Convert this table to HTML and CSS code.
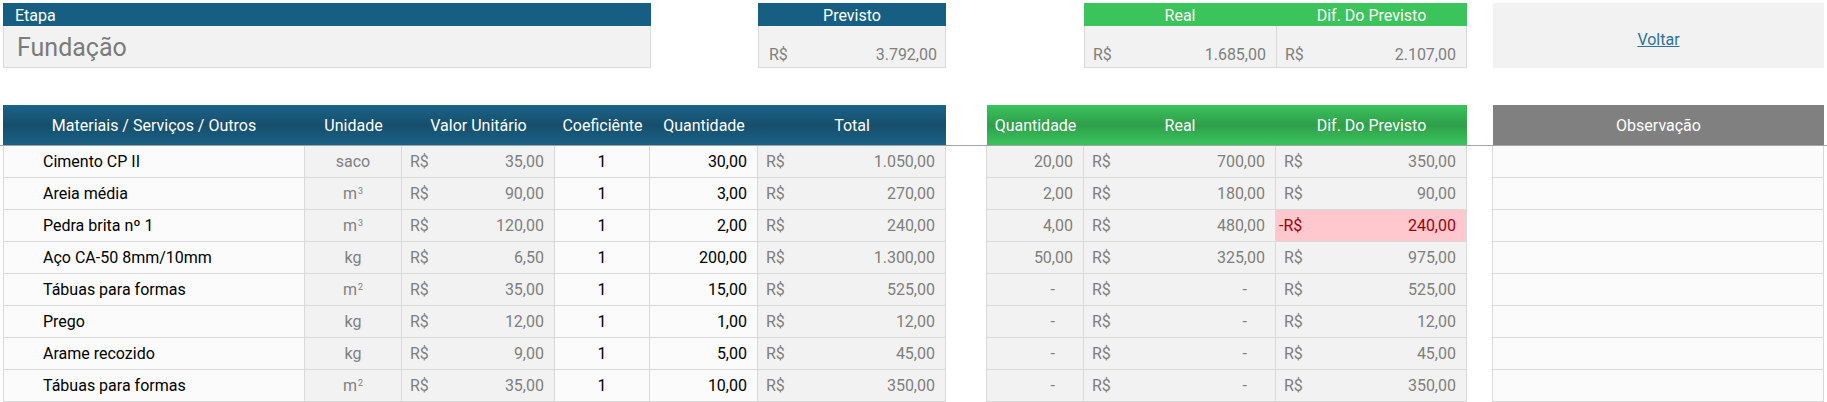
FILE: index.html
```html
<!DOCTYPE html>
<html lang="pt-BR">
<head>
<meta charset="utf-8">
<title>Fundação</title>
<link rel="stylesheet" href="styles.css">
</head>
<body>
<div class="page">
  <div class="grid top">
    <div class="card etapa">
      <div class="card-head blue left">Etapa</div>
      <div class="card-body etapa-body">Fundação</div>
    </div>
    <div class="card previsto">
      <div class="card-head blue">Previsto</div>
      <div class="card-body money-body"><span>R$</span><span>3.792,00</span></div>
    </div>
    <div class="card real">
      <div class="card-head green">Real</div>
      <div class="card-body money-body"><span>R$</span><span>1.685,00</span></div>
    </div>
    <div class="card dif">
      <div class="card-head green">Dif. Do Previsto</div>
      <div class="card-body money-body"><span>R$</span><span>2.107,00</span></div>
    </div>
    <div class="voltar"><a href="#">Voltar</a></div>
  </div>

  <div class="thead-wrap">
    <div class="grid thead">
      <div class="th blue-g">Materiais / Serviços / Outros</div>
      <div class="th blue-g">Unidade</div>
      <div class="th blue-g">Valor Unitário</div>
      <div class="th blue-g">Coeficiênte</div>
      <div class="th blue-g">Quantidade</div>
      <div class="th blue-g">Total</div>
      <div class="th-gap"></div>
      <div class="th green-g">Quantidade</div>
      <div class="th green-g">Real</div>
      <div class="th green-g">Dif. Do Previsto</div>
      <div class="th-gap"></div>
      <div class="th gray-h">Observação</div>
    </div>
  </div>

  <div class="tbody">
    <div class="grid row">
      <div class="td name">Cimento CP II</div>
      <div class="td unit">saco</div>
      <div class="td acc g"><span>R$</span><span>35,00</span></div>
      <div class="td coef">1</div>
      <div class="td qty">30,00</div>
      <div class="td acc g"><span>R$</span><span>1.050,00</span></div>
      <div class="gap"></div>
      <div class="td rq g">20,00</div>
      <div class="td acc g"><span>R$</span><span>700,00</span></div>
      <div class="td acc g"><span>R$</span><span>350,00</span></div>
      <div class="gap"></div>
      <div class="td obs"></div>
    </div>
    <div class="grid row">
      <div class="td name">Areia média</div>
      <div class="td unit">m<sup>3</sup></div>
      <div class="td acc g"><span>R$</span><span>90,00</span></div>
      <div class="td coef">1</div>
      <div class="td qty">3,00</div>
      <div class="td acc g"><span>R$</span><span>270,00</span></div>
      <div class="gap"></div>
      <div class="td rq g">2,00</div>
      <div class="td acc g"><span>R$</span><span>180,00</span></div>
      <div class="td acc g"><span>R$</span><span>90,00</span></div>
      <div class="gap"></div>
      <div class="td obs"></div>
    </div>
    <div class="grid row">
      <div class="td name">Pedra brita nº 1</div>
      <div class="td unit">m<sup>3</sup></div>
      <div class="td acc g"><span>R$</span><span>120,00</span></div>
      <div class="td coef">1</div>
      <div class="td qty">2,00</div>
      <div class="td acc g"><span>R$</span><span>240,00</span></div>
      <div class="gap"></div>
      <div class="td rq g">4,00</div>
      <div class="td acc g"><span>R$</span><span>480,00</span></div>
      <div class="td acc neg"><span>-R$</span><span>240,00</span></div>
      <div class="gap"></div>
      <div class="td obs"></div>
    </div>
    <div class="grid row">
      <div class="td name">Aço CA-50 8mm/10mm</div>
      <div class="td unit">kg</div>
      <div class="td acc g"><span>R$</span><span>6,50</span></div>
      <div class="td coef">1</div>
      <div class="td qty">200,00</div>
      <div class="td acc g"><span>R$</span><span>1.300,00</span></div>
      <div class="gap"></div>
      <div class="td rq g">50,00</div>
      <div class="td acc g"><span>R$</span><span>325,00</span></div>
      <div class="td acc g"><span>R$</span><span>975,00</span></div>
      <div class="gap"></div>
      <div class="td obs"></div>
    </div>
    <div class="grid row">
      <div class="td name">Tábuas para formas</div>
      <div class="td unit">m<sup>2</sup></div>
      <div class="td acc g"><span>R$</span><span>35,00</span></div>
      <div class="td coef">1</div>
      <div class="td qty">15,00</div>
      <div class="td acc g"><span>R$</span><span>525,00</span></div>
      <div class="gap"></div>
      <div class="td rq g dash">-</div>
      <div class="td acc g"><span>R$</span><span class="dash">-</span></div>
      <div class="td acc g"><span>R$</span><span>525,00</span></div>
      <div class="gap"></div>
      <div class="td obs"></div>
    </div>
    <div class="grid row">
      <div class="td name">Prego</div>
      <div class="td unit">kg</div>
      <div class="td acc g"><span>R$</span><span>12,00</span></div>
      <div class="td coef">1</div>
      <div class="td qty">1,00</div>
      <div class="td acc g"><span>R$</span><span>12,00</span></div>
      <div class="gap"></div>
      <div class="td rq g dash">-</div>
      <div class="td acc g"><span>R$</span><span class="dash">-</span></div>
      <div class="td acc g"><span>R$</span><span>12,00</span></div>
      <div class="gap"></div>
      <div class="td obs"></div>
    </div>
    <div class="grid row">
      <div class="td name">Arame recozido</div>
      <div class="td unit">kg</div>
      <div class="td acc g"><span>R$</span><span>9,00</span></div>
      <div class="td coef">1</div>
      <div class="td qty">5,00</div>
      <div class="td acc g"><span>R$</span><span>45,00</span></div>
      <div class="gap"></div>
      <div class="td rq g dash">-</div>
      <div class="td acc g"><span>R$</span><span class="dash">-</span></div>
      <div class="td acc g"><span>R$</span><span>45,00</span></div>
      <div class="gap"></div>
      <div class="td obs"></div>
    </div>
    <div class="grid row">
      <div class="td name">Tábuas para formas</div>
      <div class="td unit">m<sup>2</sup></div>
      <div class="td acc g"><span>R$</span><span>35,00</span></div>
      <div class="td coef">1</div>
      <div class="td qty">10,00</div>
      <div class="td acc g"><span>R$</span><span>350,00</span></div>
      <div class="gap"></div>
      <div class="td rq g dash">-</div>
      <div class="td acc g"><span>R$</span><span class="dash">-</span></div>
      <div class="td acc g"><span>R$</span><span>350,00</span></div>
      <div class="gap"></div>
      <div class="td obs"></div>
    </div>
  </div>
</div>
</body>
</html>
```

FILE: styles.css
```css
* { box-sizing: border-box; }
html, body { margin: 0; padding: 0; background: #ffffff; }
body {
  font-family: Roboto, "Liberation Sans", Arial, sans-serif;
  font-size: 16px;
  color: #000;
  overflow: hidden;
}
.page { padding: 3px 0 0 3px; width: 1827px; }

.grid {
  display: grid;
  grid-template-columns: 302px 97px 153px 95px 108px 188px 41px 97px 192px 191px 26px 331px;
}

/* ---------- top summary ---------- */
.top { height: 65px; }
.card { display: flex; flex-direction: column; }
.etapa { grid-column: 1 / 5; margin-right: -1px; }
.previsto { grid-column: 6 / 7; }
.real { grid-column: 9 / 10; }
.dif { grid-column: 10 / 11; }
.voltar { grid-column: 12 / 13; }

.card-head {
  height: 23px;
  color: #fff;
  display: flex;
  align-items: center;
  justify-content: center;
  font-size: 16px;
  padding-top: 1px;
}
.card-head.left { justify-content: flex-start; padding-left: 12px; }
.blue { background: #175f82; }
.green { background: #3bc35c; }

.card-body {
  height: 42px;
  background: #f2f2f2;
  border: 1px solid #d9d9d9;
  border-top: none;
  color: #7f7f7f;
}
.etapa-body {
  display: flex;
  align-items: center;
  padding-left: 13px;
  font-size: 25px;
  color: #7b7b7b;
  padding-top: 2px;
}
.money-body {
  display: flex;
  justify-content: space-between;
  align-items: flex-end;
  padding: 0 8px 3px 10px;
}
.real .money-body { border-right: none; padding-left: 8px; padding-right: 10px; }
.dif .money-body { border-left: 1px solid #d9d9d9; padding-left: 8px; padding-right: 10px; }

.voltar {
  background: #f2f2f2;
  display: flex;
  align-items: center;
  justify-content: center;
  padding-top: 7px;
}
.voltar a { color: #2f7197; text-decoration: underline; }

/* ---------- table head ---------- */
.thead-wrap {
  margin: 37px 0 0 -3px;
  padding-left: 3px;
  border-bottom: 1px solid #a3a3a3;
}
.thead { height: 40px; }
.th {
  color: #fff;
  display: flex;
  align-items: center;
  justify-content: center;
  font-size: 16px;
  white-space: nowrap;
}
.blue-g { background: linear-gradient(#1b6388 0%, #164f6c 50%, #1a6185 100%); }
.green-g { background: linear-gradient(#3ac35c 0%, #2f9f4a 50%, #3ac35c 100%); }
.gray-h { background: #808080; }

/* ---------- table body ---------- */
.row { height: 32px; }
.td {
  border-right: 1px solid #d9d9d9;
  border-bottom: 1px solid #d9d9d9;
  background: #fbfbfb;
  display: flex;
  align-items: center;
  white-space: nowrap;
}
.gap { border-right: 1px solid #d9d9d9; background: #fff; }
.name { border-left: 1px solid #d9d9d9; padding-left: 39px; }
.unit { background: #f2f2f2; color: #7f7f7f; justify-content: center; }
.unit sup { font-size: 9px; position: relative; top: -3px; margin-left: 1px; }
.coef { justify-content: center; }
.qty { justify-content: flex-end; padding-right: 10px; }
.g { background: #f2f2f2; color: #7f7f7f; }
.acc { justify-content: space-between; padding: 0 10px 0 8px; }
.rq { justify-content: flex-end; padding-right: 10px; }
.rq.dash { padding-right: 28px; }
.acc .dash { padding-right: 18px; }
.neg { background: #ffc7ce; color: #9c0006; padding-left: 3px; }
.obs { background: #fbfbfb; }
```
